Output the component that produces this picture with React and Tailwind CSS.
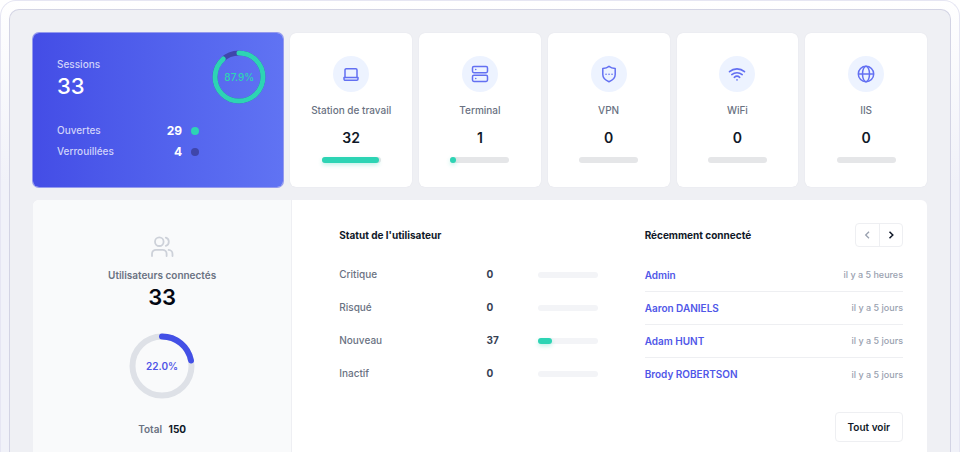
import React, { useState } from 'react';

const LaptopIcon = () => (
  <svg className="size-5" viewBox="0 0 20 20" fill="none" stroke="currentColor" strokeWidth="1.5" strokeLinecap="round" strokeLinejoin="round">
    <path d="M4 13.500V5.900a1.200 1.200 0 0 1 1.200-1.200h9.600A1.200 1.200 0 0 1 16 5.900v7.600" />
    <path d="M3 13.500h14v1.600a1.200 1.200 0 0 1-1.200 1.200H4.200A1.200 1.200 0 0 1 3 15.100z" />
  </svg>
);

const ServerIcon = () => (
  <svg className="size-5" viewBox="0 0 20 20" fill="none" stroke="currentColor" strokeWidth="1.5" strokeLinecap="round">
    <rect x="2.5" y="2.5" width="15" height="6.2" rx="1.4" />
    <rect x="2.5" y="11.3" width="15" height="6.2" rx="1.4" />
    <path d="M5.7 5.6h.1M5.7 14.4h.1" />
  </svg>
);

const ShieldIcon = () => (
  <svg className="size-5" viewBox="0 0 20 20" fill="none" stroke="currentColor" strokeWidth="1.5" strokeLinecap="round" strokeLinejoin="round">
    <path d="M10 2.3c1.6 1.3 3.6 2 6.2 2.2v6.1c0 3.2-2.4 5.6-6.2 7.1-3.8-1.5-6.2-3.9-6.2-7.1V4.5c2.6-.2 4.6-.9 6.2-2.2z" />
    <path d="M7 10.2h.1M10 10.2h.1M13 10.2h.1" />
  </svg>
);

const WifiIcon = () => (
  <svg className="size-5" viewBox="0 0 20 20" fill="none" stroke="currentColor" strokeWidth="1.6" strokeLinecap="round">
    <path d="M2.5 7.7a11.5 11.5 0 0 1 15 0" />
    <path d="M4.8 10.6a8 8 0 0 1 10.4 0" />
    <path d="M7.3 13.3a4.2 4.2 0 0 1 5.4 0" />
    <path d="M10 15.900h.05" />
  </svg>
);

const GlobeIcon = () => (
  <svg className="size-5" viewBox="0 0 20 20" fill="none" stroke="currentColor" strokeWidth="1.5">
    <circle cx="10" cy="10" r="7.7" />
    <ellipse cx="10" cy="10" rx="3.5" ry="7.7" />
    <path d="M2.3 10h15.4" />
  </svg>
);

const UsersIcon = () => (
  <svg className="size-6 text-[#cdd1d9]" viewBox="0 0 24 24" fill="none" stroke="currentColor" strokeWidth="1.8" strokeLinecap="round">
    <circle cx="9.3" cy="6.7" r="4.300" />
    <path d="M2 21v-2.2a4 4 0 0 1 4-4h6.600a4 4 0 0 1 4 4V21" />
    <path d="M15.800 2.600a4.300 4.300 0 0 1 0 8.200" />
    <path d="M18.600 14.900a4 4 0 0 1 3.900 4V21" />
  </svg>
);

const Ring = ({ percent, className, radius, stroke, size, color, track }) => {
  const length = 2 * Math.PI * radius;
  return (
    <div className={`relative ${className}`}>
      <svg className="size-full -rotate-90" viewBox={`0 0 ${size} ${size}`} fill="none" strokeWidth={stroke}>
        <circle cx={size / 2} cy={size / 2} r={radius} stroke={track} />
        <circle
          cx={size / 2}
          cy={size / 2}
          r={radius}
          stroke={color}
          strokeLinecap="round"
          strokeDasharray={`${(length * percent) / 100} ${length}`}
        />
      </svg>
      <span className="absolute inset-0 flex items-center justify-center">{percent.toFixed(1)}%</span>
    </div>
  );
};

const Bar = ({ percent, className }) => (
  <div className={`h-1.5 rounded-full ${className}`}>
    {percent > 0 && (
      <div
        className="h-full rounded-full bg-[#2dd4b4] shadow-[0_2px_4px_rgba(45,212,180,0.3)]"
        style={{ width: `${percent}%` }}
      />
    )}
  </div>
);

const types = [
  { label: 'Station de travail', value: 32, percent: 98, Icon: LaptopIcon },
  { label: 'Terminal', value: 1, percent: 10, Icon: ServerIcon },
  { label: 'VPN', value: 0, percent: 0, Icon: ShieldIcon },
  { label: 'WiFi', value: 0, percent: 0, Icon: WifiIcon },
  { label: 'IIS', value: 0, percent: 0, Icon: GlobeIcon },
];

const statuses = [
  { label: 'Critique', value: 0, percent: 0 },
  { label: 'Risqué', value: 0, percent: 0 },
  { label: 'Nouveau', value: 37, percent: 24 },
  { label: 'Inactif', value: 0, percent: 0 },
];

const recent = [
  { name: 'Admin', when: 'il y a 5 heures' },
  { name: 'Aaron DANIELS', when: 'il y a 5 jours' },
  { name: 'Adam HUNT', when: 'il y a 5 jours' },
  { name: 'Brody ROBERTSON', when: 'il y a 5 jours' },
];

const SessionsCard = () => (
  <section className="w-[28%] shrink-0 flex justify-between rounded-md bg-linear-to-r from-[#444de6] to-[#6073f3] pl-6 pr-[17px] pt-[23px] text-white ring-1 ring-[#5661ea]/60">
    <div>
      <h2 className="text-[10px] leading-4 font-medium text-[#d0d3fa]">Sessions</h2>
      <p className="text-[22px] leading-7 font-medium">33</p>
      <dl className="mt-5 w-[142px] text-[10px] leading-[21px] font-medium">
        <div className="flex items-center">
          <dt className="text-[#d0d3fa]">Ouvertes</dt>
          <dd className="ml-auto text-xs leading-[21px] font-bold">29</dd>
          <span className="ml-[9px] size-2 rounded-full bg-[#2dd4b4]" />
        </div>
        <div className="flex items-center">
          <dt className="text-[#d0d3fa]">Verrouillées</dt>
          <dd className="ml-auto text-xs leading-[21px] font-bold">4</dd>
          <span className="ml-[9px] size-2 rounded-full bg-[#3f46ab]" />
        </div>
      </dl>
    </div>
    <Ring
      percent={87.9}
      size={54}
      radius={24}
      stroke={5}
      color="#2dd4b4"
      track="#3f46ab"
      className="-mt-1.5 size-[54px] text-[10px] font-medium text-[#2dd4b4]"
    />
  </section>
);

const TypeCard = ({ label, value, percent, Icon }) => (
  <section className="flex min-w-0 flex-1 flex-col items-center rounded-md bg-white pt-[23px] pb-6 shadow-[0_0_1px_rgba(40,40,90,0.12)]">
    <div className="flex size-9 items-center justify-center rounded-full bg-[#edf3ff] text-[#6370f2]">
      <Icon />
    </div>
    <h3 className="mt-2.5 text-[10px] leading-4 font-medium text-gray-500">{label}</h3>
    <p className="mt-2.5 text-sm leading-5 font-semibold text-gray-900">{value}</p>
    <Bar percent={percent} className="mt-[9px] w-[59px] bg-[#e5e6e8]" />
  </section>
);

const ConnectedUsers = () => (
  <section className="flex w-[29%] shrink-0 flex-col items-center rounded-tl-md border-r border-[#eeeff3] bg-[#f9fafb] pt-[35px]">
    <UsersIcon />
    <h2 className="mt-2 text-[10px] leading-4 font-semibold text-gray-500">Utilisateurs connectés</h2>
    <p className="text-[22px] leading-7 font-semibold text-gray-950">33</p>
    <Ring
      percent={22}
      size={66}
      radius={29.5}
      stroke={6}
      color="#4350e6"
      track="#dee1e7"
      className="mt-[22px] size-[66px] text-[10px] font-semibold text-[#4f55e6]"
    />
    <p className="mt-[22px] pb-4 text-[10px] leading-4 font-semibold text-gray-500">
      Total <strong className="ml-1 font-bold text-gray-900">150</strong>
    </p>
  </section>
);

const UserStatus = () => (
  <section className="min-w-0 flex-1">
    <h2 className="text-[10px] leading-6 font-bold text-gray-900">Statut de l'utilisateur</h2>
    <table className="mt-[11px] w-full table-fixed text-left text-[10px]">
      <tbody>
        {statuses.map((s) => (
          <tr key={s.label} className="h-[33px]">
            <th scope="row" className="w-[57%] font-medium text-gray-500">{s.label}</th>
            <td className="w-[20%] font-bold text-gray-700">{s.value}</td>
            <td>
              <Bar percent={s.percent} className="bg-[#f3f4f7]" />
            </td>
          </tr>
        ))}
      </tbody>
    </table>
  </section>
);

const RecentlyConnected = () => {
  const [page, setPage] = useState(0);

  return (
    <section className="min-w-0 flex-1">
      <div className="flex items-center justify-between">
        <h2 className="text-[10px] leading-6 font-bold text-gray-900">Récemment connecté</h2>
        <div className="flex h-6 w-12 rounded border border-[#eeeff2]">
          <button
            type="button"
            aria-label="Précédent"
            disabled={page === 0}
            onClick={() => setPage(page - 1)}
            className="flex flex-1 items-center justify-center text-gray-400"
          >
            <svg className="size-3" viewBox="0 0 12 12" fill="none" stroke="currentColor" strokeWidth="1.300">
              <path d="M8 2.700L4.700 6 8 9.300" />
            </svg>
          </button>
          <button
            type="button"
            aria-label="Suivant"
            onClick={() => setPage(page + 1)}
            className="flex flex-1 items-center justify-center border-l border-[#eeeff2] text-gray-900"
          >
            <svg className="size-3" viewBox="0 0 12 12" fill="none" stroke="currentColor" strokeWidth="1.500">
              <path d="M4.500 2.700L7.800 6 4.500 9.300" />
            </svg>
          </button>
        </div>
      </div>
      <ul className="mt-3 divide-y divide-[#eeeff2]">
        {recent.map((user) => (
          <li key={user.name} className="flex h-[33px] items-center justify-between">
            <a href="#" className="text-[10px] font-semibold text-[#5057e8]">{user.name}</a>
            <span className="text-[9px] font-medium text-gray-400">{user.when}</span>
          </li>
        ))}
      </ul>
      <div className="mt-[21px] flex justify-end pb-2.5">
        <button type="button" className="rounded border border-[#eeeff2] px-3 py-[6px] text-[10px] leading-4 font-semibold text-gray-900">
          Tout voir
        </button>
      </div>
    </section>
  );
};

const App = () => {
  return (
    <div className="min-h-screen bg-white font-['Inter',sans-serif]">
      <div className="flex min-h-screen flex-col rounded-t-2xl border border-b-0 border-[#e6e6f3] bg-linear-to-b from-white to-[#f1f2f9] to-40% px-2 pt-2">
        <main className="flex flex-1 flex-col rounded-t-[10px] border border-b-0 border-[#d3d4e4] bg-[#eff0f4] px-[23px] pt-[23px]">
          <div className="flex gap-[7px]">
            <SessionsCard />
            {types.map((type) => (
              <TypeCard key={type.label} {...type} />
            ))}
          </div>
          <div className="mt-[13px] flex flex-1 rounded-t-md bg-white">
            <ConnectedUsers />
            <div className="flex flex-1 gap-[47px] pt-[23px] pr-6 pl-[47px]">
              <UserStatus />
              <RecentlyConnected />
            </div>
          </div>
        </main>
      </div>
    </div>
  );
};

export default App;
